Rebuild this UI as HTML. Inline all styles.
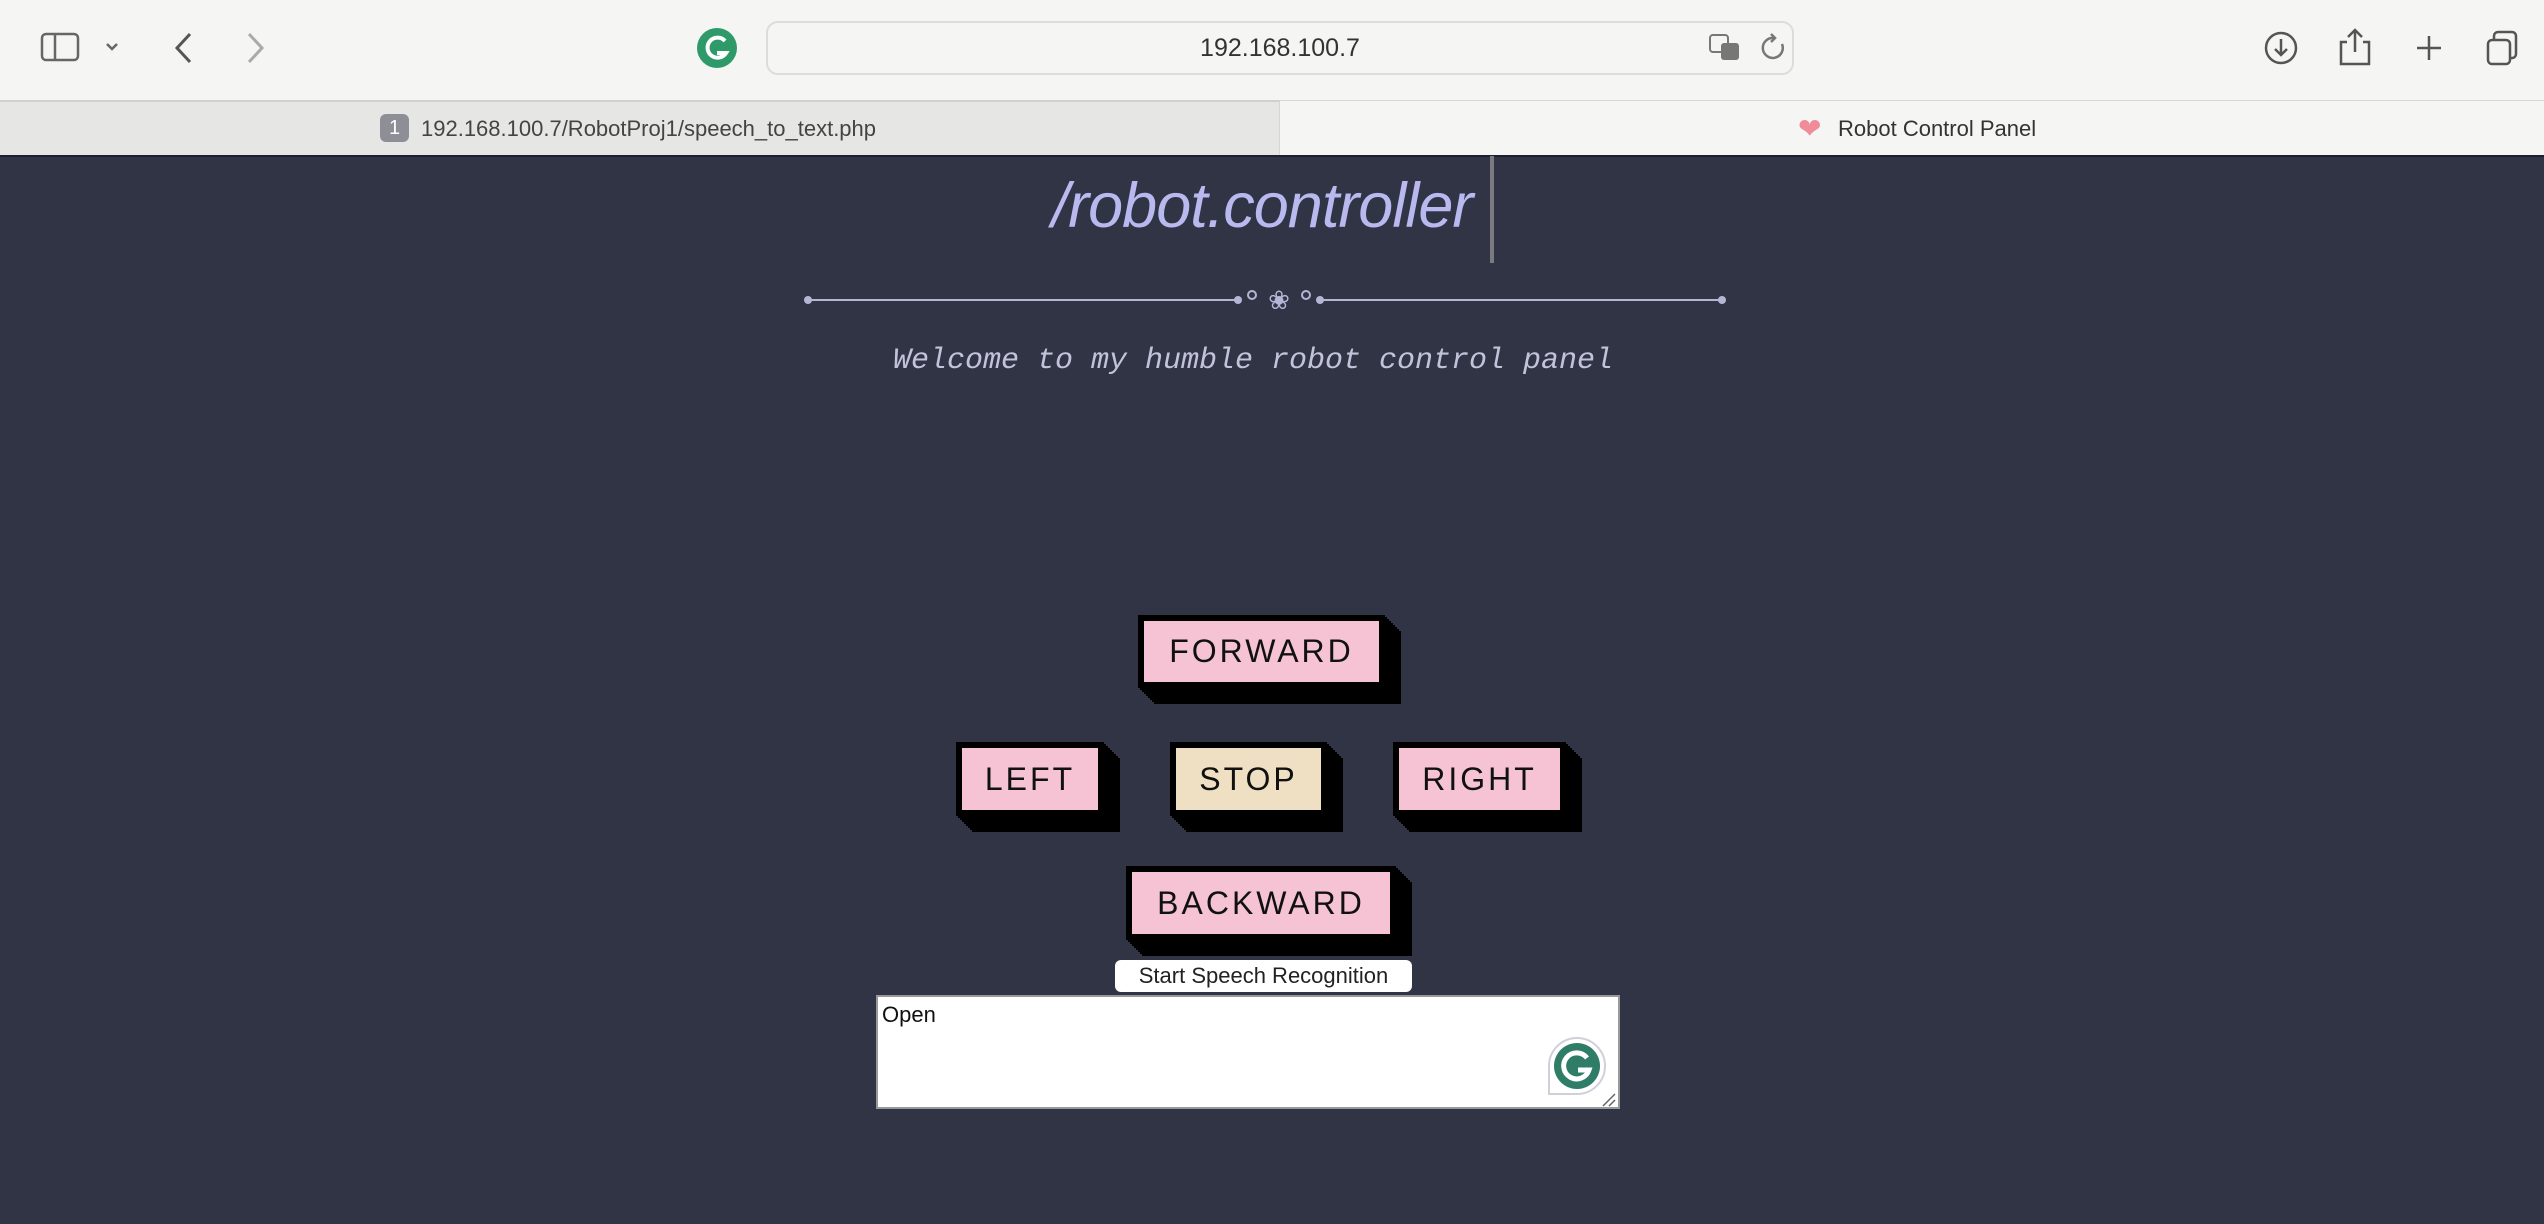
<!DOCTYPE html>
<html><head><meta charset="utf-8"><style>
*{margin:0;padding:0;box-sizing:border-box}
body{width:2544px;height:1224px;overflow:hidden;background:#313445;font-family:"Liberation Sans",sans-serif;position:relative}
.abs{position:absolute}
#bar{left:0;top:0;width:2544px;height:100px;background:#f5f5f3}
#tabs{left:0;top:100px;width:2544px;height:56px;background:#f5f5f3;border-top:1px solid #d8d8d6}
#tab1{left:0;top:100px;width:1280px;height:56px;background:#e6e6e5;border-top:2px solid #d0d0d0;border-right:1px solid #d6d6d6}
.ttext{font-size:22px;color:#444;line-height:56px}
.btn{position:absolute;background:#f5c3d3;border:6px solid #000;box-shadow:2px 2px 0 #000,4px 4px 0 #000,6px 6px 0 #000,8px 8px 0 #000,10px 10px 0 #000,12px 12px 0 #000,14px 14px 0 #000,16px 16px 0 #000;display:flex;align-items:center;justify-content:center;font-size:32px;letter-spacing:3px;color:#111}
</style></head><body>
<div id="bar" class="abs"></div>
<svg class="abs" style="left:40px;top:32px" width="120" height="30" viewBox="0 0 120 30"><rect x="2" y="2" width="36" height="26" rx="4" fill="none" stroke="#666" stroke-width="2.5"/><line x1="15" y1="2" x2="15" y2="28" stroke="#666" stroke-width="2.5"/><path d="M67 12l5 5 5-5" fill="none" stroke="#666" stroke-width="2.5"/></svg>
<svg class="abs" style="left:170px;top:30px" width="100" height="36" viewBox="0 0 100 36"><path d="M20 4L7 18l13 14" fill="none" stroke="#555" stroke-width="3"/><path d="M79 4l13 14-13 14" fill="none" stroke="#aaa" stroke-width="3"/></svg>
<svg class="abs" style="left:697px;top:28px" width="40" height="40" viewBox="0 0 40 40"><circle cx="20" cy="20" r="20" fill="#2e9a6a"/><path d="M28 13a10 10 0 1 0 1 12h-9" fill="none" stroke="#fff" stroke-width="4"/></svg>
<div class="abs" style="left:766px;top:21px;width:1028px;height:54px;border:2px solid #dcdcda;border-radius:12px;background:#f5f5f3"></div>
<div class="abs" style="left:766px;top:21px;width:1028px;height:54px;line-height:54px;text-align:center;font-size:25px;color:#333">192.168.100.7</div>
<svg class="abs" style="left:1708px;top:32px" width="80" height="32" viewBox="0 0 80 32"><rect x="2" y="3" width="18" height="17" rx="3" fill="none" stroke="#777" stroke-width="2"/><rect x="13" y="11" width="18" height="17" rx="3" fill="#777"/><path d="M66 6a10 10 0 1 0 8 6" fill="none" stroke="#777" stroke-width="2.5"/><path d="M63 2l4 4-4 4" fill="none" stroke="#777" stroke-width="2.5"/></svg>
<svg class="abs" style="left:2260px;top:26px" width="280" height="44" viewBox="0 0 280 44"><circle cx="21" cy="22" r="15" fill="none" stroke="#555" stroke-width="2.5"/><path d="M21 13v16M15 23l6 6 6-6" fill="none" stroke="#555" stroke-width="2.5"/><path d="M87 16h-6v22h28V16h-6M95 4v22M88 11l7-7 7 7" fill="none" stroke="#555" stroke-width="2.5"/><path d="M169 10v24M157 22h24" stroke="#555" stroke-width="2.5"/><rect x="228" y="14" width="22" height="24" rx="4" fill="none" stroke="#555" stroke-width="2.5"/><path d="M234 14v-4a4 4 0 0 1 4-4h14a4 4 0 0 1 4 4v18a4 4 0 0 1-4 4h-2" fill="none" stroke="#555" stroke-width="2.5"/></svg>
<div id="tabs" class="abs"></div>
<div id="tab1" class="abs"></div>
<div class="abs" style="left:380px;top:114px;width:29px;height:28px;border-radius:6px;background:#8e8e96;color:#fff;font-size:20px;text-align:center;line-height:28px">1</div>
<div class="abs ttext" style="left:421px;top:101px">192.168.100.7/RobotProj1/speech_to_text.php</div>
<div class="abs" style="left:1798px;top:114px;font-size:28px;color:#f08c98;line-height:30px">&#10084;</div>
<div class="abs ttext" style="left:1838px;top:101px;color:#333">Robot Control Panel</div>
<div class="abs" style="left:0;top:155px;width:2544px;height:2px;background:#1e2030"></div>

<div class="abs" style="left:0;top:170px;width:2544px;text-align:center;padding-right:20px;font-size:63px;font-style:italic;color:#b9b9ef;letter-spacing:-1px">/robot.controller</div>
<div class="abs" style="left:1490px;top:156px;width:4px;height:107px;background:#7a7a80"></div>
<svg class="abs" style="left:800px;top:285px" width="930" height="30" viewBox="0 0 930 30"><line x1="8" y1="15" x2="438" y2="15" stroke="#b5b5d5" stroke-width="2"/><line x1="520" y1="15" x2="922" y2="15" stroke="#b5b5d5" stroke-width="2"/><circle cx="8" cy="15" r="4" fill="#b5b5d5"/><circle cx="922" cy="15" r="4" fill="#b5b5d5"/><circle cx="438" cy="15" r="4" fill="#b5b5d5"/><circle cx="520" cy="15" r="4" fill="#b5b5d5"/><circle cx="452" cy="10" r="4" fill="none" stroke="#b5b5d5" stroke-width="2"/><circle cx="506" cy="10" r="4" fill="none" stroke="#b5b5d5" stroke-width="2"/><text x="479" y="24" text-anchor="middle" font-size="26" fill="#b5b5d5" font-family="DejaVu Sans">&#10048;</text></svg>
<div class="abs" style="left:0;top:344px;width:2544px;text-align:center;padding-right:38px;font-family:'Liberation Mono',monospace;font-style:italic;font-size:30px;color:#c2c2da">Welcome to my humble robot control panel</div>

<div class="btn" style="left:1138px;top:615px;width:247px;height:73px">FORWARD</div>
<div class="btn" style="left:956px;top:742px;width:148px;height:74px">LEFT</div>
<div class="btn" style="left:1170px;top:742px;width:157px;height:74px;background:#efe0c3">STOP</div>
<div class="btn" style="left:1393px;top:742px;width:173px;height:74px">RIGHT</div>
<div class="btn" style="left:1126px;top:866px;width:270px;height:74px">BACKWARD</div>

<div class="abs" style="left:1115px;top:960px;width:297px;height:32px;background:#fff;border-radius:6px;font-size:22px;color:#222;text-align:center;line-height:32px">Start Speech Recognition</div>
<div class="abs" style="left:876px;top:995px;width:744px;height:114px;background:#fff;border:2px solid #999;font-size:22px;color:#111;padding:5px 4px">Open</div>
<svg class="abs" style="left:1545px;top:1035px" width="64" height="62" viewBox="0 0 64 62"><path d="M32 3a28 28 0 0 1 28 28v0a28 28 0 0 1-28 28H4V31A28 28 0 0 1 32 3z" fill="#fff" stroke="#d0d0d8" stroke-width="2"/><circle cx="32" cy="31" r="23" fill="#2f7d66"/><path d="M42 23a13 13 0 1 0 2 12H33" fill="none" stroke="#fff" stroke-width="5"/></svg>
<svg class="abs" style="left:1600px;top:1091px" width="16" height="16" viewBox="0 0 16 16"><path d="M3 15L15 3M9 15l6-6" stroke="#666" stroke-width="1.5"/></svg>
</body></html>
